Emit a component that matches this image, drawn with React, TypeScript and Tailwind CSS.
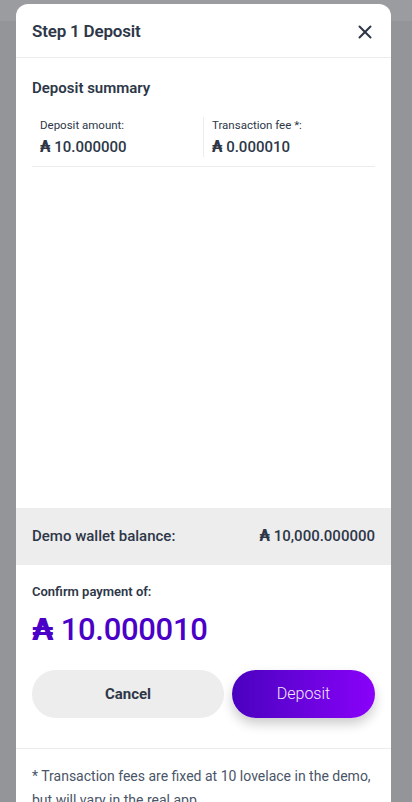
import React from 'react';
import { X } from 'lucide-react';

const font = { fontFamily: 'Roboto, "DejaVu Sans", sans-serif' };

const Ada = () => <span className="font-bold" style={{ fontFamily: '"DejaVu Sans", sans-serif' }}>₳</span>;

export default function App() {
  return (
    <div className="w-[412px] h-[802px] overflow-hidden bg-[#939598] flex flex-col" style={font}>
      <div className="h-[21px] shrink-0 bg-[#9a9c9f] -mb-[17px]" />
      <div className="ml-4 mr-[21px] bg-white rounded-t-xl flex flex-col shrink-0">
        <div className="h-[54px] px-4 pt-[3px] flex items-center justify-between border-b border-[#ececec]">
          <h1 className="text-[17px] font-semibold text-[#2d3748] tracking-[-0.2px]">Step 1 Deposit</h1>
          <X size={22} strokeWidth={2.2} className="text-[#2d3748] -mr-[1px]" />
        </div>

        <div className="h-[450px] px-4 pt-[20px]">
          <h2 className="text-[15px] font-semibold text-[#2d3748] leading-5">Deposit summary</h2>
          <div className="mt-[19px] flex border-b border-[#ececec] pb-[9px]">
            <div className="w-[172px] pl-2 border-r border-[#ececec]">
              <div className="text-[11.5px] text-[#2d3748] leading-4">Deposit amount:</div>
              <div className="text-[15px] font-medium text-[#2d3748] leading-5 mt-[4px]"><Ada /> 10.000000</div>
            </div>
            <div className="pl-2">
              <div className="text-[11.5px] text-[#2d3748] leading-4">Transaction fee *:</div>
              <div className="text-[15px] font-medium text-[#2d3748] leading-5 mt-[4px]"><Ada /> 0.000010</div>
            </div>
          </div>
        </div>

        <div className="h-[57px] bg-[#ededed] px-4 flex items-center justify-between">
          <span className="text-[15px] font-medium text-[#2d3748]">Demo wallet balance:</span>
          <span className="text-[15px] font-medium text-[#2d3748]"><Ada /> 10,000.000000</span>
        </div>

        <div className="h-[184px] px-4 pt-[19px] border-b border-[#ececec]">
          <div className="text-[13px] font-semibold text-[#2d3748] leading-4">Confirm payment of:</div>
          <div className="text-[31px] font-medium text-[#4b00c8] leading-10 mt-[9px] tracking-[-0.3px]"><Ada /> 10.000010</div>
          <div className="mt-[20px] flex gap-2">
            <button className="w-[192px] h-12 rounded-full bg-[#ededed] text-[15px] font-bold text-[#2d3748]">Cancel</button>
            <button className="flex-1 h-12 rounded-full bg-gradient-to-r from-[#4a00bf] to-[#8a00fa] text-[16px] font-light text-[#f3eaff] shadow-[0_6px_12px_rgba(0,0,0,0.2)]">Deposit</button>
          </div>
        </div>

        <div className="px-4 pt-[15px]">
          <p className="text-[14px] text-[#4a5568] leading-6">* Transaction fees are fixed at 10 lovelace in the demo, but will vary in the real app.</p>
        </div>
      </div>
    </div>
  );
}
